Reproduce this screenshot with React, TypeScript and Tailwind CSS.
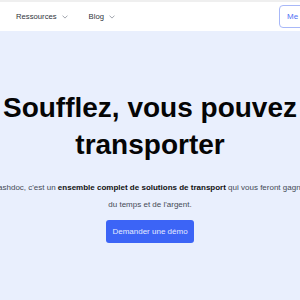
import React from "react";

function Chevron() {
  return (
    <svg width="6" height="4" viewBox="0 0 6 4" className="ml-[5px] mt-[1px]" fill="none">
      <path d="M0.5 0.6 L3 3.1 L5.5 0.6" stroke="#8a8f99" strokeWidth="0.8" />
    </svg>
  );
}

export default function App() {
  return (
    <div className="flex h-[300px] w-[300px] flex-col overflow-hidden bg-[#e9effd] font-['Liberation_Sans',Arial,sans-serif]">
      <div className="h-[2px] shrink-0 bg-[#efefef]" />

      {/* Header */}
      <header className="flex h-[29px] shrink-0 items-center justify-between bg-white pl-[16px]">
        <nav className="flex items-center gap-[21px] text-[7.7px] text-[#30343c]">
          <span className="flex items-center">
            Ressources
            <Chevron />
          </span>
          <span className="flex items-center">
            Blog
            <Chevron />
          </span>
        </nav>
        <button
          type="button"
          className="-mr-[40px] flex h-[23px] w-[61px] shrink-0 items-center rounded-[4px] border border-[#a8b8f8] pl-[7px] text-[8px] text-[#4f70f5]"
        >
          Me connecter
        </button>
      </header>

      {/* Hero */}
      <section className="flex flex-col items-center pt-[58px]">
        <h1 className="w-[300px] text-center text-[28px] font-bold leading-[37px] text-[#050505]">
          Soufflez, vous pouvez transporter
        </h1>
        <p className="mt-[16px] w-[325px] shrink-0 text-center text-[8px] leading-[17px] text-[#444a55]">
          Dashdoc, c'est un{" "}
          <strong className="font-bold text-[#111]">ensemble complet de solutions de transport</strong>{" "}
          qui vous feront gagner du temps et de l'argent.
        </p>
        <button
          type="button"
          className="mt-[7px] flex h-[23px] items-center rounded-[3px] bg-[#3c64f6] px-[6px] text-[8px] text-[#e4eaff]"
        >
          Demander une démo
        </button>
      </section>
    </div>
  );
}
